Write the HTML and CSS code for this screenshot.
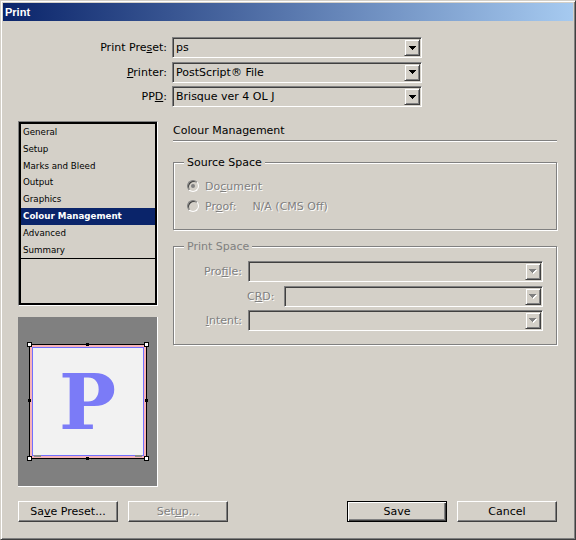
FILE: index.html
```html
<!DOCTYPE html>
<html>
<head>
<meta charset="utf-8">
<title>Print</title>
<link rel="stylesheet" href="styles.css">
</head>
<body>
<div class="window">
  <div class="titlebar">Print</div>
  <div class="content">
    <div class="topform">
      <span class="lbl">Print Pre<u>s</u>et:</span>
      <div class="combo"><span class="val">ps</span><span class="dd"><svg width="7" height="4" viewBox="0 0 7 4" shape-rendering="crispEdges"><path d="M0 0h7v1H0zM1 1h5v1H1zM2 2h3v1H2zM3 3h1v1H3z" fill="#000"/></svg></span></div>
      <span class="lbl"><u>P</u>rinter:</span>
      <div class="combo"><span class="val">PostScript® File</span><span class="dd"><svg width="7" height="4" viewBox="0 0 7 4" shape-rendering="crispEdges"><path d="M0 0h7v1H0zM1 1h5v1H1zM2 2h3v1H2zM3 3h1v1H3z" fill="#000"/></svg></span></div>
      <span class="lbl">PP<u>D</u>:</span>
      <div class="combo"><span class="val">Brisque ver 4 OL J</span><span class="dd"><svg width="7" height="4" viewBox="0 0 7 4" shape-rendering="crispEdges"><path d="M0 0h7v1H0zM1 1h5v1H1zM2 2h3v1H2zM3 3h1v1H3z" fill="#000"/></svg></span></div>
    </div>

    <div class="main">
      <div class="leftcol">
        <div class="listbox">
          <div class="listinner">
            <ul class="items">
              <li>General</li>
              <li>Setup</li>
              <li>Marks and Bleed</li>
              <li>Output</li>
              <li>Graphics</li>
              <li class="sel">Colour Management</li>
              <li>Advanced</li>
              <li>Summary</li>
            </ul>
          </div>
        </div>
        <div class="preview">
          <div class="page">
            <div class="trim"><span class="bigp">P</span></div>
            <span class="bar bar-l"></span>
            <span class="bar bar-r"></span>
            <span class="h corner tl"></span>
            <span class="h corner tr"></span>
            <span class="h corner bl"></span>
            <span class="h corner br"></span>
            <span class="h mid tm"></span>
            <span class="h mid bm"></span>
            <span class="h mid lm"></span>
            <span class="h mid rm"></span>
          </div>
        </div>
      </div>

      <div class="rightcol">
        <div class="sectitle">Colour Management</div>
        <div class="divider"></div>
        <fieldset class="group src">
          <legend>Source Space</legend>
          <div class="radiorow"><span class="radio checked"><span class="dot"></span></span><span class="dis">Do<u>c</u>ument</span></div>
          <div class="radiorow"><span class="radio"></span><span class="dis">Pr<u>o</u>of:</span><span class="dis na">N/A (CMS Off)</span></div>
        </fieldset>
        <fieldset class="group ps">
          <legend class="dislegend">Print Space</legend>
          <div class="psrow"><span class="pslbl dis">Pro<u>f</u>ile:</span><div class="combo"><span class="val"></span><span class="dd"><svg width="8" height="5" viewBox="0 0 8 5" shape-rendering="crispEdges"><path d="M1 1h7v1H1zM2 2h5v1H2zM3 3h3v1H3zM4 4h1v1H4z" fill="#fff"/><path d="M0 0h7v1H0zM1 1h5v1H1zM2 2h3v1H2zM3 3h1v1H3z" fill="#808080"/></svg></span></div></div>
          <div class="psrow crd"><span class="crdlbl dis">C<u>R</u>D:</span><div class="combo"><span class="val"></span><span class="dd"><svg width="8" height="5" viewBox="0 0 8 5" shape-rendering="crispEdges"><path d="M1 1h7v1H1zM2 2h5v1H2zM3 3h3v1H3zM4 4h1v1H4z" fill="#fff"/><path d="M0 0h7v1H0zM1 1h5v1H1zM2 2h3v1H2zM3 3h1v1H3z" fill="#808080"/></svg></span></div></div>
          <div class="psrow"><span class="pslbl dis"><u>I</u>ntent:</span><div class="combo"><span class="val"></span><span class="dd"><svg width="8" height="5" viewBox="0 0 8 5" shape-rendering="crispEdges"><path d="M1 1h7v1H1zM2 2h5v1H2zM3 3h3v1H3zM4 4h1v1H4z" fill="#fff"/><path d="M0 0h7v1H0zM1 1h5v1H1zM2 2h3v1H2zM3 3h1v1H3z" fill="#808080"/></svg></span></div></div>
        </fieldset>
      </div>
    </div>

    <div class="buttons">
      <div class="btngroup">
        <div class="btn">Sa<u>v</u>e Preset...</div>
        <div class="btn"><span class="dis">Set<u>u</u>p...</span></div>
      </div>
      <div class="btngroup">
        <div class="btn default">Save</div>
        <div class="btn">Cancel</div>
      </div>
    </div>
  </div>
</div>
</body>
</html>
```
FILE: styles.css
```css
html, body {
  margin: 0;
  padding: 0;
}
body {
  width: 576px;
  height: 540px;
  overflow: hidden;
  background: #d4d0c8;
  font-family: "DejaVu Sans", "Liberation Sans", sans-serif;
  font-size: 11px;
  color: #000;
}
u {
  text-decoration: underline;
  text-underline-offset: 1px;
}
.window {
  box-sizing: border-box;
  width: 576px;
  height: 540px;
  border: 1px solid;
  border-color: #d4d0c8 #404040 #404040 #d4d0c8;
  box-shadow: inset 1px 1px 0 #fff, inset -1px -1px 0 #808080;
  padding: 2px;
  background: #d4d0c8;
}
.titlebar {
  height: 18px;
  background: linear-gradient(to right, #0a246a, #a6caf0);
  color: #fff;
  font-family: "Liberation Sans", sans-serif;
  font-weight: bold;
  font-size: 11px;
  padding-left: 2px;
  display: flex;
  align-items: center;
}
.content {
  padding: 16px 16px 0 15px;
}
.topform {
  display: grid;
  grid-template-columns: 149px 250px;
  column-gap: 5px;
  row-gap: 3.5px;
  align-items: center;
}
.lbl {
  text-align: right;
  white-space: nowrap;
}
.combo {
  box-sizing: border-box;
  height: 21px;
  border: 1px solid;
  border-color: #808080 #fff #fff #808080;
  box-shadow: inset 1px 1px 0 #404040, inset -1px -1px 0 #d4d0c8;
  padding: 1px;
  display: flex;
  flex: 1;
}
.combo .val {
  flex: 1;
  padding-left: 2px;
  line-height: 17px;
  white-space: nowrap;
  overflow: hidden;
}
.combo .dd {
  box-sizing: border-box;
  width: 16px;
  height: 17px;
  border: 1px solid;
  border-color: #d4d0c8 #404040 #404040 #d4d0c8;
  box-shadow: inset 1px 1px 0 #fff, inset -1px -1px 0 #808080;
  display: flex;
  align-items: center;
  justify-content: center;
}
.combo .dd svg {
  display: block;
}
.main {
  display: flex;
  gap: 15px;
  margin-top: 14px;
}
.leftcol {
  width: 140px;
  display: flex;
  flex-direction: column;
}
.listbox {
  box-sizing: border-box;
  height: 185px;
  border: 1px solid;
  border-color: #808080 #fff #fff #808080;
}
.listinner {
  box-sizing: border-box;
  height: 100%;
  border: 2px solid #000;
}
.items {
  list-style: none;
  margin: 0;
  padding: 0;
  border-bottom: 1px solid #000;
  font-size: 8.7px;
}
.items li {
  height: 16.8px;
  line-height: 17.6px;
  padding-left: 2px;
  white-space: nowrap;
}
.items li.sel {
  background: #0a246a;
  color: #fff;
  font-weight: bold;
}
.preview {
  margin-top: 11px;
  box-sizing: border-box;
  height: 170px;
  background: #808080;
  border-right: 1px solid #fff;
  border-bottom: 1px solid #fff;
  display: flex;
  align-items: center;
  justify-content: center;
}
.page {
  position: relative;
  box-sizing: border-box;
  width: 118px;
  height: 115px;
  border: 1px solid #000;
  background: #f7b3b8;
  padding: 2px;
}
.trim {
  box-sizing: border-box;
  height: 100%;
  border: 1px solid #7070ff;
  background: #f2f2f2;
  display: flex;
  align-items: center;
  justify-content: center;
}
.bigp {
  font-family: "DejaVu Serif", serif;
  font-weight: bold;
  font-size: 76px;
  line-height: 1;
  color: #7b7bf7;
  margin-top: 2px;
}
.bar {
  position: absolute;
  top: 110px;
  width: 7px;
  height: 2px;
  background: #8c8c8c;
}
.bar-l { left: 4px; }
.bar-r { left: 105px; }
.h {
  position: absolute;
  box-sizing: border-box;
}
.corner {
  width: 5px;
  height: 5px;
  border: 1px solid #000;
  background: #fff;
}
.tl { left: -3px; top: -3px; }
.tr { right: -3px; top: -3px; }
.bl { left: -3px; bottom: -3px; }
.br { right: -3px; bottom: -3px; }
.mid {
  width: 3px;
  height: 3px;
  background: #000;
}
.tm { left: 56px; top: -2px; }
.bm { left: 56px; bottom: -2px; }
.lm { left: -2px; top: 54px; }
.rm { right: -2px; top: 54px; }
.rightcol {
  width: 384px;
  padding-top: 2px;
}
.sectitle {
  line-height: 16px;
}
.divider {
  height: 1px;
  background: #808080;
  border-bottom: 1px solid #fff;
  margin-top: 1px;
}
fieldset.group {
  margin: 14px 0 0;
  padding: 9px 13px 15px 10px;
  border: 1px solid #808080;
  box-shadow: inset 1px 1px 0 #fff, 1px 1px 0 #fff;
  min-width: 0;
}
fieldset.group legend {
  padding: 0 3px;
  background: #d4d0c8;
  line-height: 13px;
}
fieldset.ps {
  margin-top: 10px;
  padding-top: 8px;
  padding-bottom: 13px;
}
.dislegend {
  color: #808080;
}
.dis {
  color: #808080;
  text-shadow: 1px 1px 0 #fff;
}
.radiorow {
  display: flex;
  align-items: center;
  height: 16px;
}
.radiorow + .radiorow {
  margin-top: 4px;
}
.radio {
  box-sizing: border-box;
  width: 12px;
  height: 12px;
  border-radius: 50%;
  border: 1px solid;
  border-color: #808080 #fff #fff #808080;
  box-shadow: inset 1px 1px 0 #404040, inset -1px -1px 0 #d4d0c8;
  background: #d4d0c8;
  margin-left: 3px;
  margin-right: 6px;
  display: flex;
  align-items: center;
  justify-content: center;
}
.radio .dot {
  width: 4px;
  height: 4px;
  border-radius: 50%;
  background: #808080;
}
.na {
  margin-left: 16px;
}
.psrow {
  display: flex;
  align-items: center;
}
.psrow + .psrow {
  margin-top: 3.5px;
}
.pslbl {
  width: 58px;
  text-align: right;
  margin-right: 6px;
  white-space: nowrap;
}
.psrow.crd {
  padding-left: 63px;
}
.crdlbl {
  margin-right: 9px;
}
.buttons {
  display: flex;
  justify-content: space-between;
  margin-top: 14px;
}
.btngroup {
  display: flex;
  gap: 10px;
}
.btn {
  box-sizing: border-box;
  width: 100px;
  height: 21px;
  border: 1px solid;
  border-color: #fff #404040 #404040 #fff;
  box-shadow: inset -1px -1px 0 #808080;
  display: flex;
  align-items: center;
  justify-content: center;
  white-space: nowrap;
}
.btn.default {
  border: 1px solid #000;
  box-shadow: inset 1px 1px 0 #fff, inset -1px -1px 0 #404040, inset -2px -2px 0 #808080;
}
```
